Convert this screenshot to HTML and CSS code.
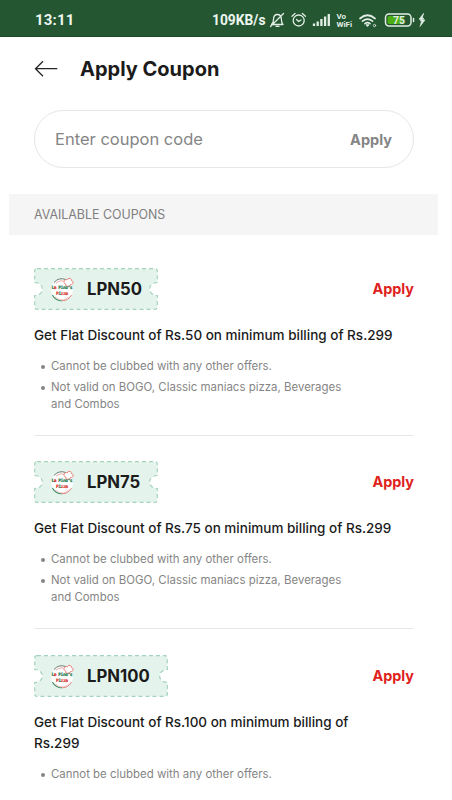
FILE: index.html
```html
<!DOCTYPE html>
<html lang="en">
<head>
<meta charset="utf-8">
<title>Apply Coupon</title>
<link rel="stylesheet" href="styles.css">
</head>
<body>
<svg class="defs" width="0" height="0" aria-hidden="true">
  <symbol id="logo" viewBox="0 0 26 26">
    <circle cx="12" cy="14" r="10.8" fill="#fff"/>
    <path d="M4 6.500A10.800 10.800 0 0 1 16 3.600" fill="none" stroke="#6d7c71" stroke-width="1"/>
    <path d="M6 7.200A9 9 0 0 1 15.500 5.700" fill="none" stroke="#e5a09b" stroke-width=".9"/>
    <path d="M2.400 19A11 11 0 0 0 12 24.800" fill="none" stroke="#3f9068" stroke-width="1.100"/>
    <path d="M12 24.800A11 11 0 0 0 21.500 19" fill="none" stroke="#df8781" stroke-width="1"/>
    <path d="M5 20.500A8.800 8.800 0 0 0 19 20.500" fill="none" stroke="#eaa5a0" stroke-width=".7"/>
    <path d="M16 8.500c-4-2-1-6 1.200-4.600C18 1.500 22 2 21.400 4.600c2.800.4 2 4.400-1 4l-.8 2-3.800-.6z" fill="#fff" stroke="#e57770" stroke-width=".9"/>
  </symbol>
</svg>
<header class="status">
  <span class="clock">13:11</span>
  <span class="speed">109KB/s</span>
  <svg class="status-icons" width="160" height="20" viewBox="0 0 160 20" fill="none" stroke="#e2eee5" stroke-width="1.300" stroke-linecap="round" stroke-linejoin="round">
    <path d="M2.500 14.500H14c-1.600-1.400-1.600-2.500-1.600-5C12.400 6 10.500 4.500 8.400 4.500S4.500 6 4.500 9.500c0 2.500-.4 3.600-2 5zM7 16.300h3M1.500 16.500L14.500 3.500"/>
    <circle cx="29.700" cy="10.500" r="5.500"/><path d="M27.500 9.500l2.200 2 2.300-1.500M23 6.200l3-2.700M36.400 6.200l-3-2.700"/>
    <path stroke-width="2.300" stroke-linecap="butt" d="M45 16v-2.500M48.700 16v-4.500M52.400 16V9M56.100 16V6.500M59.800 16V4"/>
    <path stroke-width="1.700" d="M91 8.500q7.500-6.500 15 0M93.500 11.200q5-4 10 0M96 13.600q2.500-2 5 0"/>
    <path d="M97.500 15l1 1 1-1z" fill="#e2eee5"/><circle cx="105.500" cy="15.500" r="1.200" stroke-width=".8"/>
    <rect x="116.500" y="4" width="25.500" height="12" rx="3.500" stroke-width="1.500"/><rect x="118.500" y="6" width="16" height="8" rx="1.500" fill="#49ad13" stroke="none"/><path d="M144.500 8.500v3" stroke-width="1.500"/>
    <path d="M154.500 3.500L150 9.200l3 .6-2 .9 1.500.6-1.500 5.200 5-6.500-3-.6 2-.9-1.500-.5z" fill="#e2eee5" stroke-width=".6"/>
    <g class="status-labels"><text x="67.500" y="9">Vo</text><text x="67.500" y="16.500">WiFi</text><text class="charge" x="124" y="13.600">75</text></g>
  </svg>
</header>
<main>
  <div class="topbar">
    <svg class="back" width="24" height="18" viewBox="0 0 24 18" fill="none" stroke="#252525" stroke-width="1.300"><path d="M9 1.300L1.500 8.700 9 16.200M1.500 8.700H23.300"/></svg>
    <h1>Apply Coupon</h1>
  </div>
  <div class="entry"><span class="hint">Enter coupon code</span><span class="entry-apply">Apply</span></div>
  <h2>AVAILABLE COUPONS</h2>

  <section class="coupon">
    <div class="row">
      <div class="ticket">
        <svg class="shape" width="124" height="42" viewBox="0 0 124 42"><path d="M3 .7H121Q123.300 .7 123.300 3V14.500C113 15 113 27 123.300 27.500V39Q123.300 41.300 121 41.300H3Q.7 41.300 .7 39V27.500C11 27 11 15 .7 14.500V3Q.7 .7 3 .7Z"/></svg>
        <svg class="logo" viewBox="0 0 26 26"><use href="#logo"/><text class="logo-text" x="1.500" y="13.200" textLength="21">L<tspan class="red">a</tspan> Pino's</text><text class="logo-text red" x="6" y="18.800" textLength="12">P<tspan class="green">i</tspan>zza</text></svg>
        <b>LPN50</b>
      </div>
      <span class="apply">Apply</span>
    </div>
    <p>Get Flat Discount of Rs.50 on minimum billing of Rs.299</p>
    <ul><li>Cannot be clubbed with any other offers.</li><li>Not valid on BOGO, Classic maniacs pizza, Beverages<br>and Combos</li></ul>
  </section>
  <section class="coupon">
    <div class="row">
      <div class="ticket">
        <svg class="shape" width="124" height="42" viewBox="0 0 124 42"><path d="M3 .7H121Q123.300 .7 123.300 3V14.500C113 15 113 27 123.300 27.500V39Q123.300 41.300 121 41.300H3Q.7 41.300 .7 39V27.500C11 27 11 15 .7 14.500V3Q.7 .7 3 .7Z"/></svg>
        <svg class="logo" viewBox="0 0 26 26"><use href="#logo"/><text class="logo-text" x="1.500" y="13.200" textLength="21">L<tspan class="red">a</tspan> Pino's</text><text class="logo-text red" x="6" y="18.800" textLength="12">P<tspan class="green">i</tspan>zza</text></svg>
        <b>LPN75</b>
      </div>
      <span class="apply">Apply</span>
    </div>
    <p>Get Flat Discount of Rs.75 on minimum billing of Rs.299</p>
    <ul><li>Cannot be clubbed with any other offers.</li><li>Not valid on BOGO, Classic maniacs pizza, Beverages<br>and Combos</li></ul>
  </section>
  <section class="coupon last">
    <div class="row">
      <div class="ticket wide">
        <svg class="shape" width="134" height="42" viewBox="0 0 134 42"><path d="M3 .7H131Q133.300 .7 133.300 3V14.500C123 15 123 27 133.300 27.500V39Q133.300 41.300 131 41.300H3Q.7 41.300 .7 39V27.500C11 27 11 15 .7 14.500V3Q.7 .7 3 .7Z"/></svg>
        <svg class="logo" viewBox="0 0 26 26"><use href="#logo"/><text class="logo-text" x="1.500" y="13.200" textLength="21">L<tspan class="red">a</tspan> Pino's</text><text class="logo-text red" x="6" y="18.800" textLength="12">P<tspan class="green">i</tspan>zza</text></svg>
        <b>LPN100</b>
      </div>
      <span class="apply">Apply</span>
    </div>
    <p>Get Flat Discount of Rs.100 on minimum billing of<br>Rs.299</p>
    <ul><li>Cannot be clubbed with any other offers.</li></ul>
  </section>
</main>
</body>
</html>
```
FILE: styles.css
```css
* { box-sizing: border-box; }
body { margin: 0; height: 800px; overflow: hidden; background: #fff; color: #1b1b1b; font-family: Inter, "Liberation Sans", sans-serif; }
.defs { position: absolute; }
.status { height: 37px; padding: 3px 0 0 35px; display: flex; align-items: center; background: #235631; color: #eef6f0; font-family: Roboto, sans-serif; border-bottom: 1px solid #1c4a29; }
.clock { width: 177px; font-size: 15px; font-weight: 700; letter-spacing: .2px; }
.speed { width: 57px; font-size: 13.800px; font-weight: 700; white-space: nowrap; }
.status-icons { display: block; flex: none; }
.status-labels { fill: #e2eee5; stroke: none; font: 700 8px Roboto, sans-serif; }
.status-labels .charge { font-size: 10.500px; }
.topbar { height: 73px; padding: 0 0 10px 34px; display: flex; align-items: center; }
.back { width: 24px; }
h1 { margin: 0 0 0 22px; font-size: 20px; line-height: 26px; font-weight: 700; }
.entry { height: 58px; margin: 0 38px 0 34px; padding: 0 21px 0 20px; display: flex; align-items: center; justify-content: space-between; border: 1px solid #e6e6e6; border-radius: 29px; color: #858585; }
.hint { font-size: 16.500px; }
.entry-apply { font-size: 14.500px; font-weight: 700; }
h2 { height: 41px; margin: 26px 14px 33px 9px; padding-left: 25px; background: #f5f5f5; color: #7f7f7f; font-size: 12.400px; line-height: 41px; font-weight: 400; }
.coupon { height: 168px; margin: 0 38px 25.400px 34px; border-bottom: 1px solid #e7e7e7; }
.coupon.last { height: 130px; margin-bottom: 0; border: 0; }
.row { height: 42px; display: flex; align-items: center; justify-content: space-between; }
.ticket { position: relative; width: 124px; height: 42px; padding-left: 16px; display: flex; align-items: center; }
.ticket.wide { width: 134px; }
.shape { position: absolute; left: 0; top: 0; fill: #e4f4ec; stroke: #a5d4bd; stroke-width: 1.200; stroke-dasharray: 4 3; }
.logo { position: relative; width: 26px; height: 26px; flex: none; }
.logo-text { font: 700 4.600px "DejaVu Sans Mono", monospace; fill: #237a50; stroke: #237a50; stroke-width: .2; }
.logo-text.red, .red { fill: #d9362f; stroke: #d9362f; }
.green { fill: #237a50; stroke: #237a50; }
.ticket b { margin-left: 11px; z-index: 1; font-size: 16.700px; line-height: 22px; font-weight: 700; }
.apply { color: #df211b; font-size: 14.400px; line-height: 18px; font-weight: 700; }
p { margin: 14.800px 0 12px; font-size: 13.500px; line-height: 21px; font-weight: 500; white-space: nowrap; }
ul { margin: 0; padding: 0; list-style: none; color: #858585; font-size: 11.450px; line-height: 17px; }
li { position: relative; margin: 0 0 4px; padding-left: 17px; white-space: nowrap; }
li::before { content: ""; position: absolute; left: 6.500px; top: 7px; width: 4px; height: 4px; border-radius: 50%; background: #858585; }
```
